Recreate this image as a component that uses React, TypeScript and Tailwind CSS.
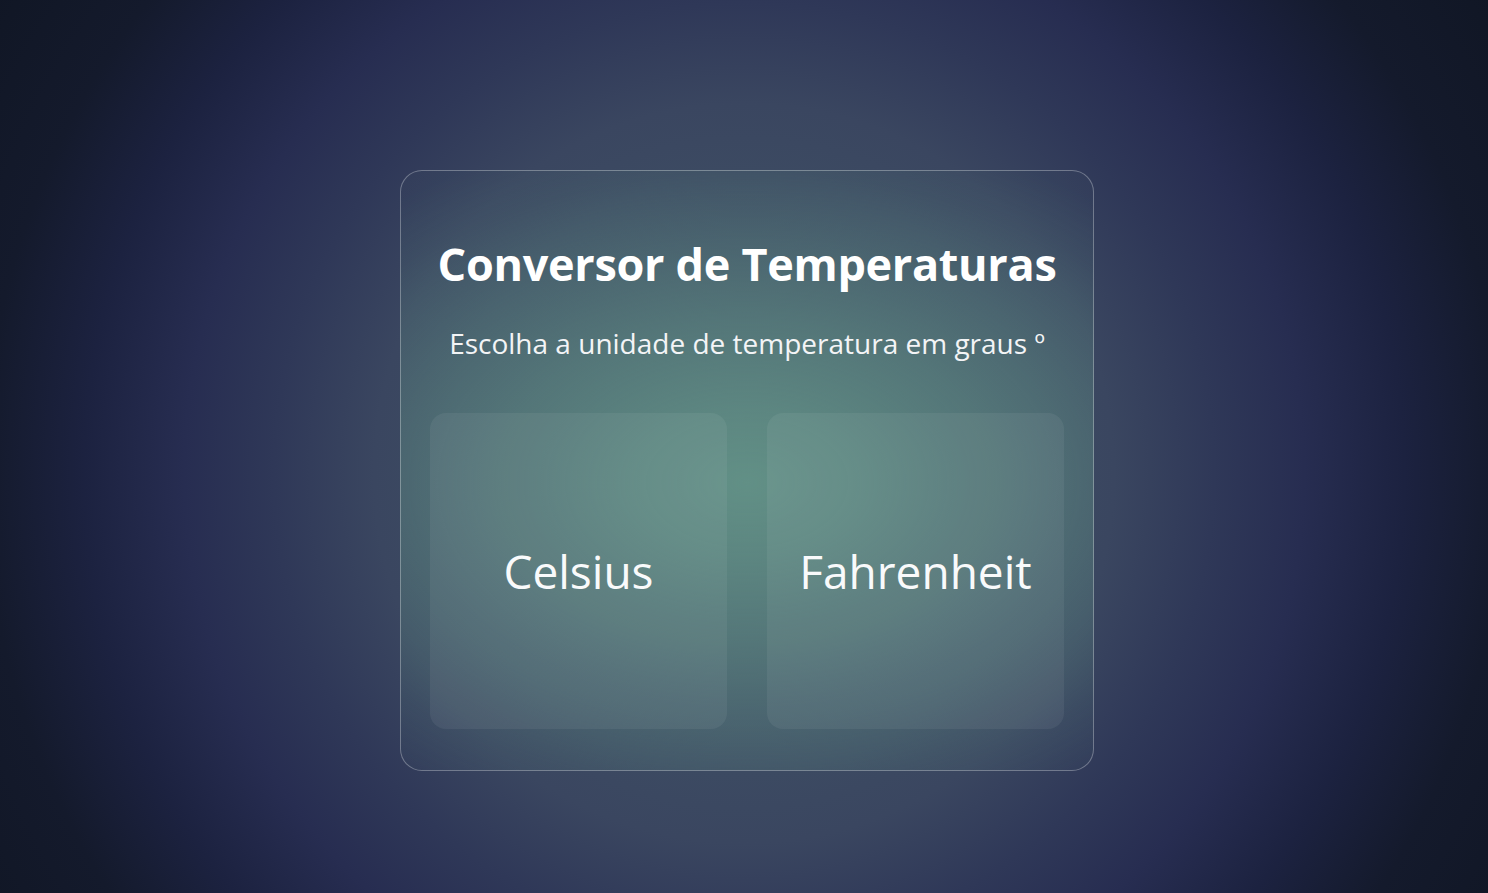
const units = ["Celsius", "Fahrenheit"];

export default function App() {
  return (
    <div
      className="flex h-screen w-full items-center justify-center bg-[radial-gradient(circle_at_50%_53%,#3f4e64_0px,#3c4a62_300px,#3a4660_370px,#2f3858_470px,#272d51_560px,#1c2240_660px,#141a2c_760px,#101624_900px)] pt-12 pl-[6px]"
      style={{ fontFamily: '"Open Sans", "Noto Sans", sans-serif' }}
    >
      <div className="w-[694px] rounded-[22px] border-[1.5px] border-white/30 bg-[radial-gradient(ellipse_560px_360px_at_50%_52%,rgba(98,144,134,1)_0%,rgba(98,144,134,0.86)_20%,rgba(98,144,134,0.62)_45%,rgba(98,144,134,0.38)_66%,rgba(98,144,134,0.14)_86%,rgba(98,144,134,0.04)_100%)] px-[29px] pt-[67px] pb-[41px]">
        <h1 className="text-center text-[45px] font-bold leading-[52px] tracking-[-0.3px] text-white">
          Conversor de Temperaturas
        </h1>
        <p className="mt-[36px] text-center text-[28px] leading-[34px] text-gray-100">
          Escolha a unidade de temperatura em graus º
        </p>
        <div className="mt-[53px] grid grid-cols-2 gap-10">
          {units.map((u) => (
            <button
              key={u}
              className="flex h-[316px] items-center justify-center rounded-2xl bg-white/[0.06] text-[46px] text-gray-50"
            >
              {u}
            </button>
          ))}
        </div>
      </div>
    </div>
  );
}
